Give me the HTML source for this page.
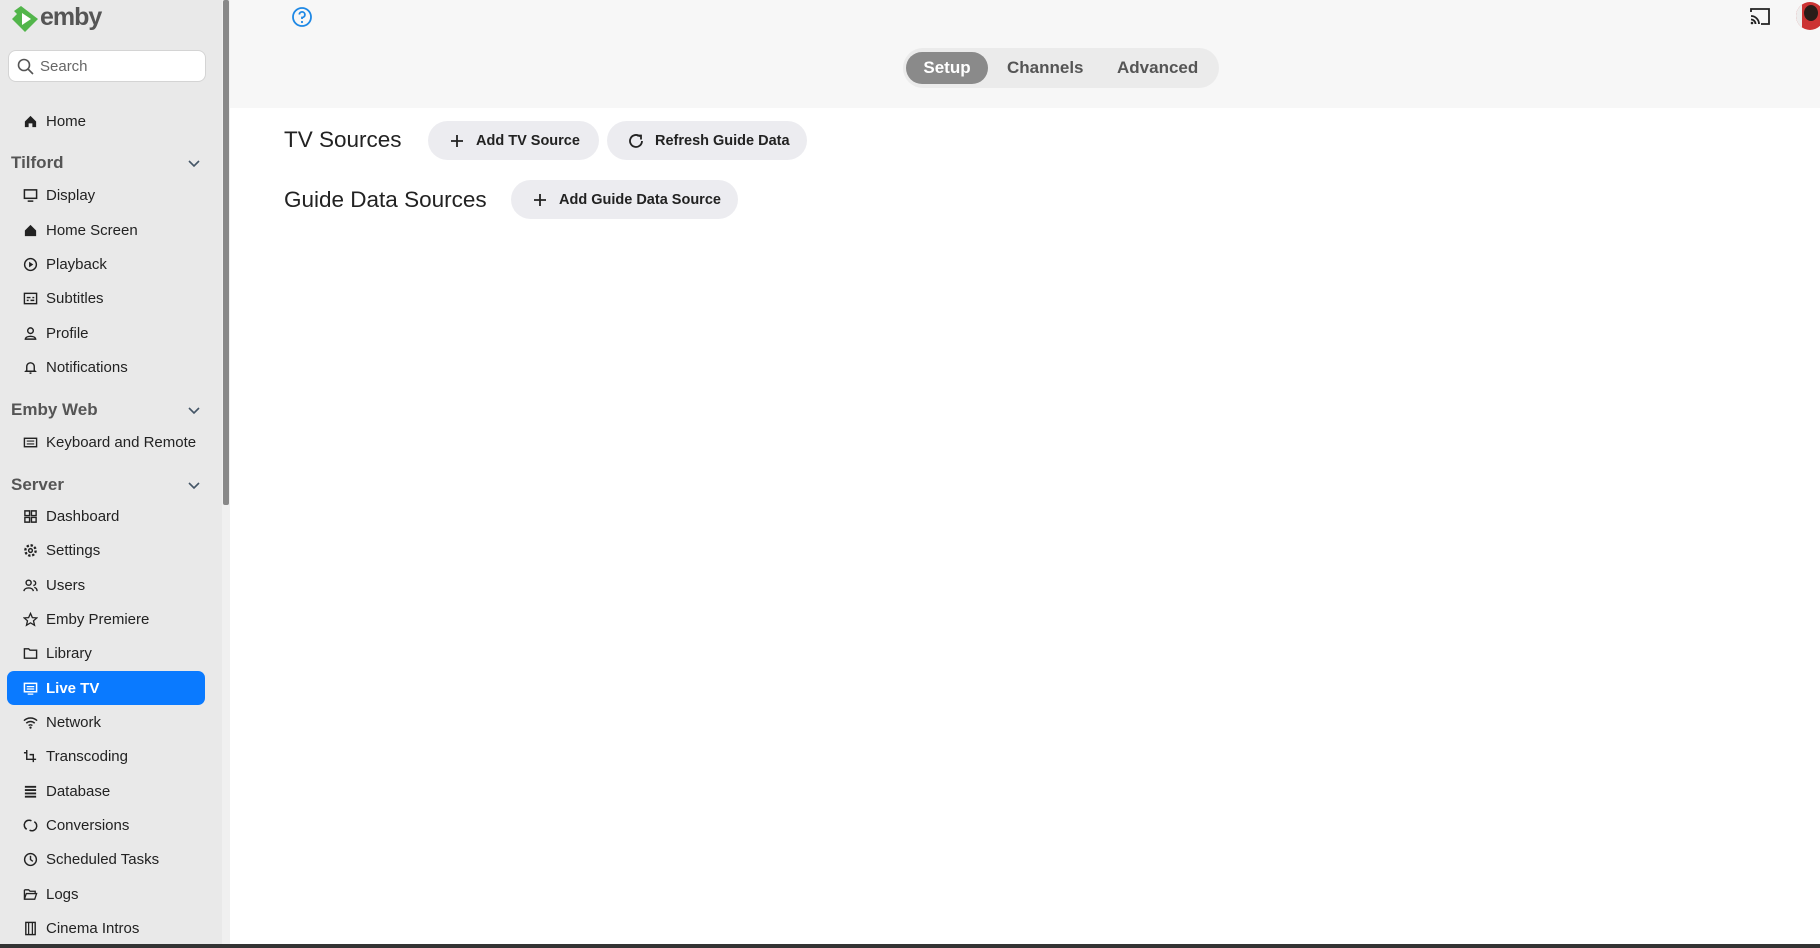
<!DOCTYPE html>
<html><head><meta charset="utf-8"><style>
*{box-sizing:border-box;margin:0;padding:0}
body{width:1820px;height:948px;overflow:hidden;font-family:"Liberation Sans",sans-serif;background:#fff;position:relative;color:#222}
.side{position:absolute;left:0;top:0;width:222px;height:944px;background:#e9e9e9}
.sb{position:absolute;left:222px;top:0;width:8px;height:944px;background:#f0f0f0}
.sb div{position:absolute;left:1px;top:0;width:6px;height:505px;background:#888;border-radius:2px}
.top{position:absolute;left:230px;top:0;right:0;height:108px;background:#f7f7f7}
.bottom{position:absolute;left:0;bottom:0;width:1820px;height:4px;background:#333}
.item{position:absolute;left:7px;width:198px;height:34px;display:flex;align-items:center;font-size:15px;color:#222}
.item svg{position:absolute;left:16px;width:15px;height:15px}
.item span{position:absolute;left:39px}
.item.act{background:#0a7aff;color:#fff;border-radius:7px;font-weight:bold}
.hdr{position:absolute;left:11px;font-size:17px;font-weight:bold;color:#555}
.chev{position:absolute;left:187px;width:14px;height:14px}
.search{position:absolute;left:8px;top:50px;width:198px;height:32px;background:#fff;border:1px solid #d4d4d4;border-radius:8px;font-size:15px;color:#666}
.tabs{position:absolute;left:673px;top:48px;width:316px;height:40px;background:#ebebeb;border-radius:20px;font-size:17px}
.tab{position:absolute;top:4px;height:32px;line-height:32px;color:#555;font-weight:bold}
.btn{position:absolute;height:39px;background:#ececf0;border-radius:20px;font-size:14.5px;font-weight:bold;color:#222;display:flex;align-items:center;padding-left:48px}
.btn svg{position:absolute;left:20px;width:18px;height:18px}
h2{position:absolute;left:284px;font-size:22.5px;font-weight:normal;color:#222}
</style></head><body>
<div class="side">
<svg style="position:absolute;left:11px;top:5px" width="28" height="28" viewBox="0 0 28 28"><path d="M10 1 L27 14 L14 27 L1 14 L6 9 L3 6Z" fill="#52b54b"/><path d="M11 8 L20 14 L11 20Z" fill="#fff"/></svg>
<div style="position:absolute;left:40px;top:3px;font-size:25px;font-weight:bold;color:#555;letter-spacing:-1px">emby</div>
<div class="search"><svg style="position:absolute;left:8px;top:7px" width="17" height="17" viewBox="0 0 17 17"><circle cx="7" cy="7" r="5.5" fill="none" stroke="#555" stroke-width="1.6"/><path d="M11 11 L16 16" stroke="#555" stroke-width="1.6"/></svg><span style="position:absolute;left:31px;top:7px">Search</span></div>

<div class="item" style="top:104px"><svg viewBox="0 0 16 16"><path d="M2 8 L8 2 L14 8 V14 H10 V10 H6 V14 H2Z" fill="#222"/></svg><span>Home</span></div>
<div class="hdr" style="top:153px">Tilford</div><svg class="chev" style="top:156px" viewBox="0 0 14 14"><path d="M2 5 L7 10 L12 5" fill="none" stroke="#456" stroke-width="1.6"/></svg>
<div class="item" style="top:178px"><svg viewBox="0 0 16 16"><rect x="1.5" y="2" width="13" height="9" fill="none" stroke="#222" stroke-width="1.6"/><path d="M5 14 H11" stroke="#222" stroke-width="1.6"/></svg><span>Display</span></div>
<div class="item" style="top:213px"><svg viewBox="0 0 16 16"><path d="M2 8 L8 2 L14 8 V14 H2Z" fill="#222"/></svg><span>Home Screen</span></div>
<div class="item" style="top:247px"><svg viewBox="0 0 16 16"><circle cx="8" cy="8" r="6.3" fill="none" stroke="#222" stroke-width="1.5"/><path d="M6.5 5 L11 8 L6.5 11Z" fill="#222"/></svg><span>Playback</span></div>
<div class="item" style="top:281px"><svg viewBox="0 0 16 16"><rect x="1.5" y="2.5" width="13" height="11" fill="none" stroke="#222" stroke-width="1.5"/><path d="M4 7 H8 M10 7 H12 M4 10 H6 M8 10 H12" stroke="#222" stroke-width="1.5"/></svg><span>Subtitles</span></div>
<div class="item" style="top:316px"><svg viewBox="0 0 16 16"><circle cx="8" cy="5" r="3" fill="none" stroke="#222" stroke-width="1.5"/><path d="M2.5 14 C3 10 13 10 13.5 14Z" fill="none" stroke="#222" stroke-width="1.5"/></svg><span>Profile</span></div>
<div class="item" style="top:350px"><svg viewBox="0 0 16 16"><path d="M4 11 V7 A4 4 0 0 1 12 7 V11 L13 12 H3Z M7 14 H9" fill="none" stroke="#222" stroke-width="1.5"/></svg><span>Notifications</span></div>
<div class="hdr" style="top:400px">Emby Web</div><svg class="chev" style="top:403px" viewBox="0 0 14 14"><path d="M2 5 L7 10 L12 5" fill="none" stroke="#456" stroke-width="1.6"/></svg>
<div class="item" style="top:425px"><svg viewBox="0 0 16 16"><rect x="1.5" y="3.5" width="13" height="9" fill="none" stroke="#222" stroke-width="1.5"/><path d="M4 6.5 H12 M4 9.5 H12" stroke="#222" stroke-width="1.2"/></svg><span>Keyboard and Remote</span></div>
<div class="hdr" style="top:475px">Server</div><svg class="chev" style="top:478px" viewBox="0 0 14 14"><path d="M2 5 L7 10 L12 5" fill="none" stroke="#456" stroke-width="1.6"/></svg>
<div class="item" style="top:499px"><svg viewBox="0 0 16 16"><path d="M2 2 H7 V7 H2Z M9 2 H14 V7 H9Z M2 9 H7 V14 H2Z M9 9 H14 V14 H9Z" fill="none" stroke="#222" stroke-width="1.5"/></svg><span>Dashboard</span></div>
<div class="item" style="top:533px"><svg viewBox="0 0 16 16"><circle cx="8" cy="8" r="5.5" fill="none" stroke="#222" stroke-width="2.5" stroke-dasharray="2.5 1.8"/><circle cx="8" cy="8" r="2" fill="none" stroke="#222" stroke-width="1.5"/></svg><span>Settings</span></div>
<div class="item" style="top:568px"><svg viewBox="0 0 16 16"><circle cx="6" cy="5" r="2.7" fill="none" stroke="#222" stroke-width="1.5"/><path d="M1 14 C1.5 9.5 10.5 9.5 11 14 M11 3 A2.5 2.5 0 0 1 11 8 M12 10 C14 10.5 15 12 15 14" fill="none" stroke="#222" stroke-width="1.5"/></svg><span>Users</span></div>
<div class="item" style="top:602px"><svg viewBox="0 0 16 16"><path d="M8 1.5 L10 6 L14.8 6.3 L11.2 9.4 L12.3 14.2 L8 11.6 L3.7 14.2 L4.8 9.4 L1.2 6.3 L6 6Z" fill="none" stroke="#222" stroke-width="1.4"/></svg><span>Emby Premiere</span></div>
<div class="item" style="top:636px"><svg viewBox="0 0 16 16"><path d="M1.5 3 H6 L7.5 4.5 H14.5 V13 H1.5Z" fill="none" stroke="#222" stroke-width="1.5"/></svg><span>Library</span></div>
<div class="item act" style="top:671px"><svg viewBox="0 0 16 16"><rect x="1.5" y="2.5" width="13" height="9" fill="none" stroke="#fff" stroke-width="1.6"/><path d="M4 6 H12 M4 8.5 H12 M5 14 H11" stroke="#fff" stroke-width="1.4"/></svg><span>Live TV</span></div>
<div class="item" style="top:705px"><svg viewBox="0 0 16 16"><path d="M1 6 A10 10 0 0 1 15 6 M3.5 8.7 A6.5 6.5 0 0 1 12.5 8.7 M6 11.3 A3 3 0 0 1 10 11.3" fill="none" stroke="#222" stroke-width="1.6"/><circle cx="8" cy="13.5" r="1.2" fill="#222"/></svg><span>Network</span></div>
<div class="item" style="top:739px"><svg viewBox="0 0 16 16"><path d="M4 1 V11 H14 M1 4 H4 M11 14 V6 H7" fill="none" stroke="#222" stroke-width="1.5"/></svg><span>Transcoding</span></div>
<div class="item" style="top:774px"><svg viewBox="0 0 16 16"><path d="M2 3 H14 M2 6.5 H14 M2 10 H14 M2 13.5 H14" stroke="#222" stroke-width="2"/></svg><span>Database</span></div>
<div class="item" style="top:808px"><svg viewBox="0 0 16 16"><path d="M4 12 A5 5 0 0 1 9 3 M12 4 A5 5 0 0 1 7 13" fill="none" stroke="#222" stroke-width="1.6"/></svg><span>Conversions</span></div>
<div class="item" style="top:842px"><svg viewBox="0 0 16 16"><circle cx="8" cy="8" r="6.3" fill="none" stroke="#222" stroke-width="1.5"/><path d="M8 4 V8 L10.5 10" fill="none" stroke="#222" stroke-width="1.5"/></svg><span>Scheduled Tasks</span></div>
<div class="item" style="top:877px"><svg viewBox="0 0 16 16"><path d="M1.5 3 H6 L7.5 4.5 H13 V7 M1.5 3 V13 H12.5 L14.5 7 H3.5 L1.5 13" fill="none" stroke="#222" stroke-width="1.4"/></svg><span>Logs</span></div>
<div class="item" style="top:911px"><svg viewBox="0 0 16 16"><rect x="3" y="1.5" width="10" height="13" fill="none" stroke="#222" stroke-width="1.5"/><path d="M6 1.5 V14.5 M10 1.5 V14.5" stroke="#222" stroke-width="1.3"/></svg><span>Cinema Intros</span></div>
</div>
<div class="sb"><div></div></div>
<div class="top">
<svg style="position:absolute;left:61px;top:6px" width="22" height="22" viewBox="0 0 22 22"><circle cx="11" cy="11" r="9" fill="none" stroke="#1e88e5" stroke-width="1.8"/><path d="M8.3 8.5 A2.8 2.8 0 1 1 11 11.5 V13" fill="none" stroke="#1e88e5" stroke-width="1.8"/><circle cx="11" cy="16" r="1.1" fill="#1e88e5"/></svg>
<svg style="position:absolute;left:1519px;top:7px" width="22" height="20" viewBox="0 0 22 20"><path d="M2 5 V2 H20 V17 H12" fill="none" stroke="#222" stroke-width="1.8"/><path d="M2 9 A8 8 0 0 1 10 17 M2 12.5 A4.5 4.5 0 0 1 6.5 17" fill="none" stroke="#222" stroke-width="1.8"/><circle cx="3" cy="16" r="1.3" fill="#222"/></svg>
<div style="position:absolute;left:1566px;top:2px;width:28px;height:28px;border-radius:50%;background:#c33;overflow:hidden"><div style="position:absolute;left:8px;top:3px;width:14px;height:16px;border-radius:50%;background:#2a1c18"></div><div style="position:absolute;left:0;top:0;width:6px;height:28px;background:#eee"></div></div>
<div class="tabs">
<div class="tab" style="left:3px;width:82px;background:#8a8a8a;color:#fff;border-radius:16px;text-align:center">Setup</div>
<div class="tab" style="left:104px">Channels</div>
<div class="tab" style="left:214px">Advanced</div>
</div>
</div>
<h2 style="top:127px">TV Sources</h2>
<div class="btn" style="left:428px;top:121px;width:171px"><svg viewBox="0 0 18 18"><path d="M9 3 V15 M3 9 H15" stroke="#222" stroke-width="1.8"/></svg>Add TV Source</div>
<div class="btn" style="left:607px;top:121px;width:200px;padding-left:48px"><svg viewBox="0 0 18 18"><path d="M15 9 A6 6 0 1 1 13 4.5" fill="none" stroke="#222" stroke-width="1.8"/><path d="M10 3.5 H14 V7.5" fill="none" stroke="#222" stroke-width="1.8"/></svg>Refresh Guide Data</div>
<h2 style="top:187px">Guide Data Sources</h2>
<div class="btn" style="left:511px;top:180px;width:227px;padding-left:48px"><svg viewBox="0 0 18 18"><path d="M9 3 V15 M3 9 H15" stroke="#222" stroke-width="1.8"/></svg>Add Guide Data Source</div>
<div class="bottom"></div>
</body></html>
